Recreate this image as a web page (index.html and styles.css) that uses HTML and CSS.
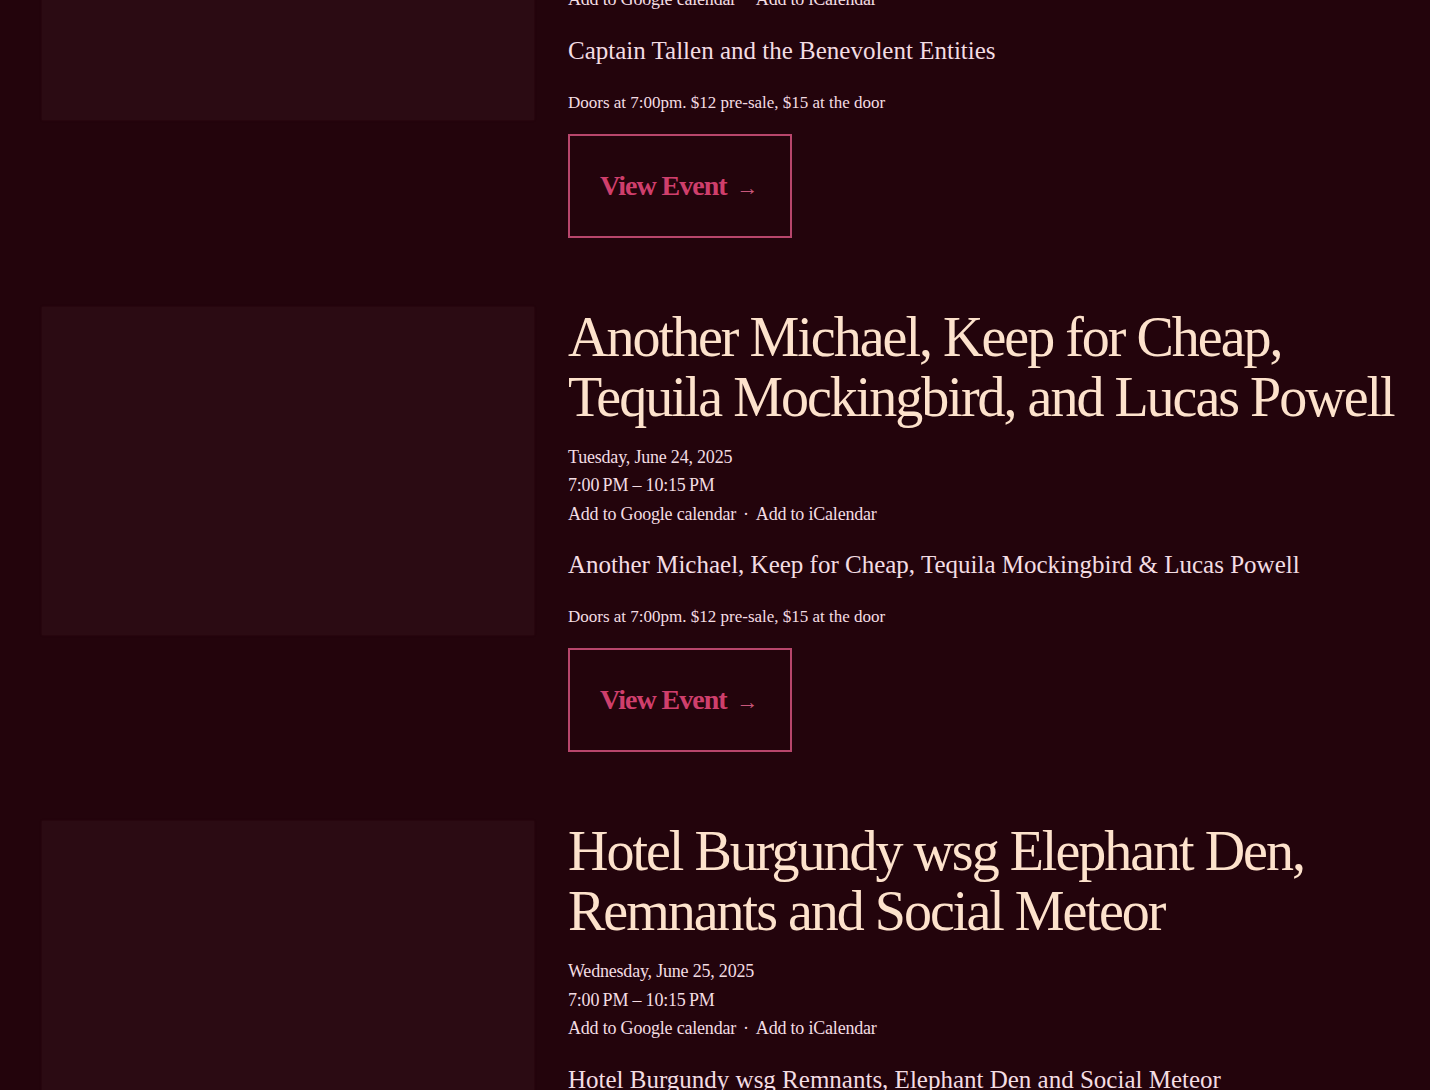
FILE: index.html
```html
<!DOCTYPE html>
<html lang="en">
<head>
<meta charset="utf-8">
<title>Events</title>
<link rel="stylesheet" href="styles.css">
</head>
<body>
<main class="events">
  <article class="event">
    <div class="event-image"></div>
    <div class="event-body">
      <h2 class="event-title">Captain Tallen and the Benevolent Entities</h2>
      <ul class="event-meta">
        <li>Monday, June 23, 2025</li>
        <li>7:00&thinsp;PM – 10:15&thinsp;PM</li>
        <li><a href="#">Add to Google calendar</a><span class="sep">·</span><a href="#">Add to iCalendar</a></li>
      </ul>
      <h3 class="event-subtitle">Captain Tallen and the Benevolent Entities</h3>
      <p class="event-desc">Doors at 7:00pm. $12 pre-sale, $15 at the door</p>
      <a class="btn" href="#">View Event <span class="arrow">→</span></a>
    </div>
  </article>

  <article class="event">
    <div class="event-image"></div>
    <div class="event-body">
      <h2 class="event-title">Another Michael, Keep for Cheap, Tequila Mockingbird, and Lucas Powell</h2>
      <ul class="event-meta">
        <li>Tuesday, June 24, 2025</li>
        <li>7:00&thinsp;PM – 10:15&thinsp;PM</li>
        <li><a href="#">Add to Google calendar</a><span class="sep">·</span><a href="#">Add to iCalendar</a></li>
      </ul>
      <h3 class="event-subtitle">Another Michael, Keep for Cheap, Tequila Mockingbird &amp; Lucas Powell</h3>
      <p class="event-desc">Doors at 7:00pm. $12 pre-sale, $15 at the door</p>
      <a class="btn" href="#">View Event <span class="arrow">→</span></a>
    </div>
  </article>

  <article class="event">
    <div class="event-image"></div>
    <div class="event-body">
      <h2 class="event-title">Hotel Burgundy wsg Elephant Den, Remnants and Social Meteor</h2>
      <ul class="event-meta">
        <li>Wednesday, June 25, 2025</li>
        <li>7:00&thinsp;PM – 10:15&thinsp;PM</li>
        <li><a href="#">Add to Google calendar</a><span class="sep">·</span><a href="#">Add to iCalendar</a></li>
      </ul>
      <h3 class="event-subtitle">Hotel Burgundy wsg Remnants, Elephant Den and Social Meteor</h3>
      <p class="event-desc">Doors at 7:00pm. $12 pre-sale, $15 at the door</p>
      <a class="btn" href="#">View Event <span class="arrow">→</span></a>
    </div>
  </article>
</main>
</body>
</html>
```
FILE: styles.css
```css
html, body {
  margin: 0;
  padding: 0;
  background: #23040c;
  overflow: hidden;
}

body {
  font-family: "Liberation Serif", "Times New Roman", serif;
  color: #f3dde3;
}

.events {
  display: flex;
  flex-direction: column;
  gap: 69px;
  padding: 0 24px 0 42px;
  margin-top: -208px;
}

.event {
  display: flex;
  align-items: flex-start;
  gap: 34px;
}

.event-image {
  flex: 0 0 492px;
  height: 328px;
  background: #2b0b13;
  box-shadow: 0 0 2px rgba(60, 20, 28, 0.6);
}

.event-body {
  flex: 1;
  min-width: 0;
}

.event-title {
  margin: 0;
  font-size: 56px;
  line-height: 60px;
  font-weight: 400;
  letter-spacing: -2px;
  color: #fde2cc;
}

.event-meta {
  list-style: none;
  margin: 16px 0 0;
  padding: 0;
  font-size: 18px;
  line-height: 28.5px;
  letter-spacing: -0.2px;
}

.event-meta a {
  color: inherit;
  text-decoration: none;
}

.sep {
  margin: 0 7px;
}

.event-subtitle {
  margin: 21px 0 0;
  font-size: 25px;
  line-height: 32px;
  font-weight: 400;
}

.event-desc {
  margin: 22px 0 0;
  font-size: 17px;
  line-height: 27px;
}

.btn {
  display: inline-flex;
  align-items: baseline;
  margin-top: 18px;
  padding: 30px 31px 30px 30px;
  border: 2px solid #b8466c;
  font-size: 28px;
  line-height: 40px;
  font-weight: 700;
  letter-spacing: -1px;
  color: #cf3f6c;
  text-decoration: none;
}

.arrow {
  margin-left: 10px;
  font-size: 22px;
  line-height: 20px;
  font-weight: 400;
  letter-spacing: 0;
  color: #c9577b;
}
```
